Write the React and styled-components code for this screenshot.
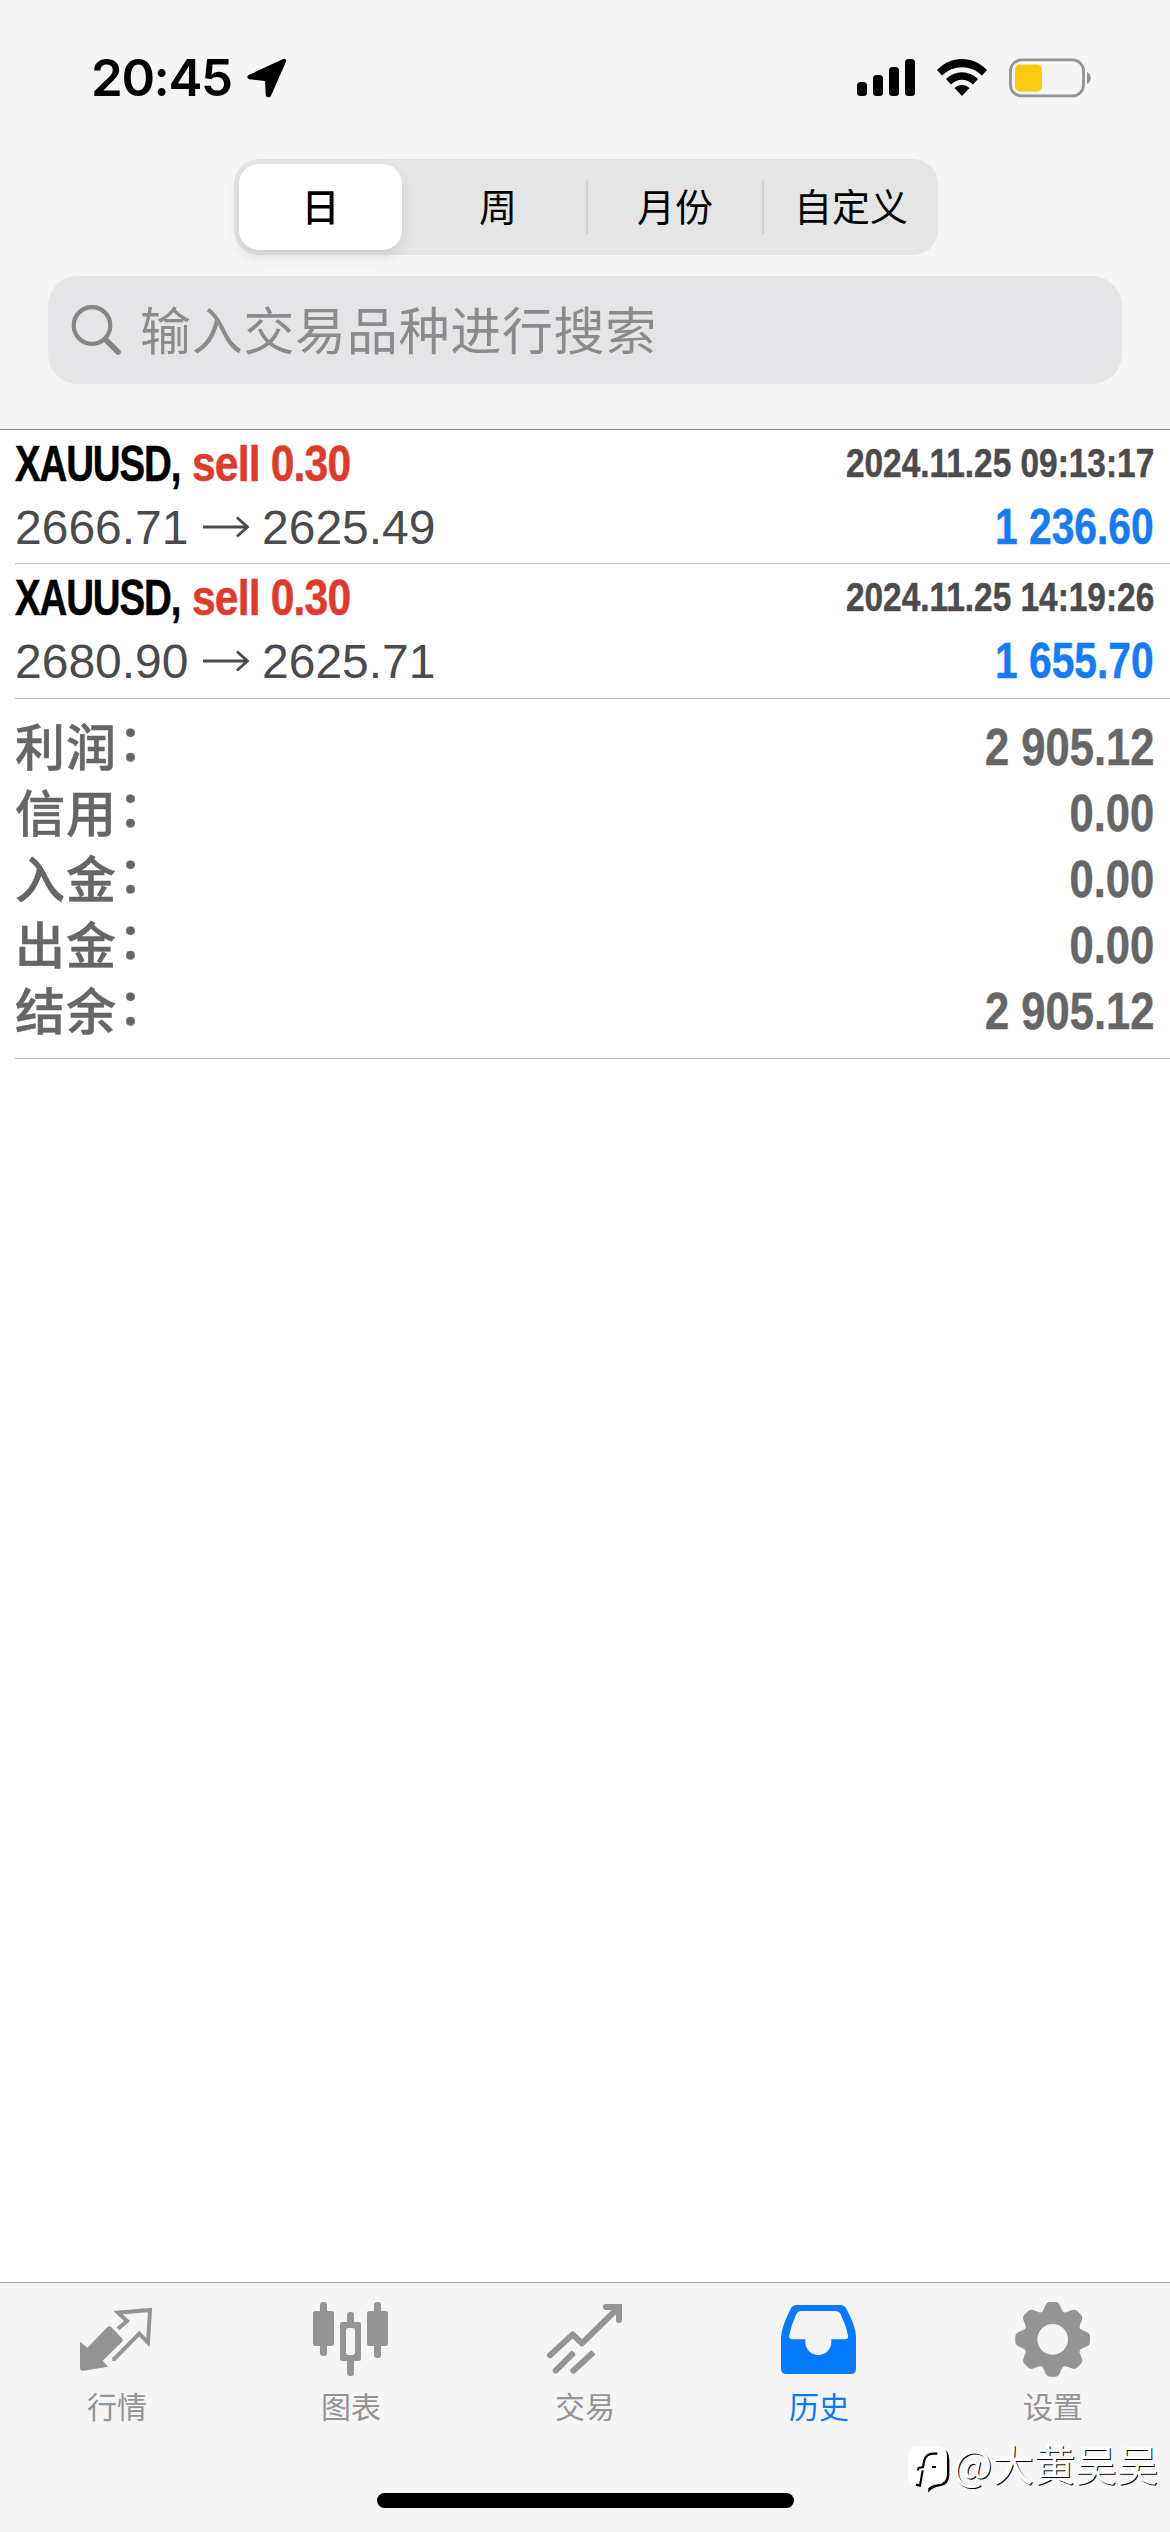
import React from "react";
import styled, { createGlobalStyle } from "styled-components";

const colors = {
  bar: "#f5f5f5",
  blue: "#157bf7",
  red: "#e03a2b",
  text: "#4b4b4d",
  muted: "#666666",
  tab: "#949494",
};

const sans = `"Liberation Sans", "Noto Sans CJK SC", sans-serif`;
const cjk = `"Noto Sans CJK SC", sans-serif`;

const GlobalStyle = createGlobalStyle`
  *, *::before, *::after {
    box-sizing: border-box;
  }
  body {
    margin: 0;
    background: #ffffff;
    font-family: ${sans};
  }
`;

const Screen = styled.div`
  position: relative;
  display: flex;
  flex-direction: column;
  width: 1170px;
  height: 2532px;
  overflow: hidden;
  background: #ffffff;
`;

const Header = styled.header`
  display: flex;
  flex-direction: column;
  height: 430px;
  background: ${colors.bar};
  border-bottom: 1px solid #8a8a8a;
`;

const StatusBar = styled.div`
  display: flex;
  align-items: center;
  justify-content: space-between;
  height: 159px;
  padding: 0 79px 4px 91px;
`;

const StatusGroup = styled.div`
  display: flex;
  align-items: center;
  gap: ${(props) => props.$gap}px;
`;

const Clock = styled.span`
  font-family: Inter, sans-serif;
  font-size: 51px;
  font-weight: 600;
  line-height: 60px;
  letter-spacing: -1.4px;
  color: #000000;
`;

const Segments = styled.div`
  display: grid;
  grid-template-columns: repeat(4, 1fr);
  align-items: center;
  width: 704px;
  height: 96px;
  margin-left: 234px;
  border-radius: 25px;
  background: #e5e5e5;
`;

const Segment = styled.button`
  height: ${(props) => (props.$active ? 86 : 54)}px;
  margin: ${(props) => (props.$active ? "0 8px 0 5px" : "0")};
  padding: 0 0 4px;
  border: 0;
  border-left: ${(props) => (props.$divided ? "2px solid #d2d2d3" : "0")};
  border-radius: ${(props) => (props.$active ? 20 : 0)}px;
  background: ${(props) => (props.$active ? "#ffffff" : "transparent")};
  box-shadow: ${(props) =>
    props.$active ? "0 6px 14px rgba(0, 0, 0, 0.1)" : "none"};
  font-family: ${cjk};
  font-size: 38px;
  font-weight: ${(props) => (props.$active ? 500 : 400)};
  line-height: 50px;
  color: #000000;
`;

const SearchField = styled.div`
  display: flex;
  align-items: center;
  gap: 17px;
  height: 108px;
  margin: 21px 48px 0;
  padding-left: 23px;
  border-radius: 30px;
  background: #e5e5e7;
`;

const Placeholder = styled.span`
  padding-bottom: 5px;
  font-family: ${cjk};
  font-size: 51px;
  line-height: 72px;
  letter-spacing: 0.7px;
  color: #8b8b8d;
`;

const History = styled.main`
  flex: 1;
  padding-left: 15px;
`;

const Deal = styled.div`
  height: ${(props) => props.$height}px;
  padding: 3px 16px 0 0;
  border-bottom: 1px solid #c2c2c4;
`;

const DealLine = styled.div`
  display: flex;
  align-items: baseline;
  justify-content: space-between;
  height: 63px;
  line-height: 63px;
`;

const Title = styled.div`
  display: flex;
  align-items: baseline;
`;

// Bold text squeezed horizontally towards its own left or right edge
const Condensed = styled.span`
  display: block;
  margin: 0;
  font-weight: 700;
  white-space: nowrap;
  -webkit-text-stroke: 0.5px currentColor;
  transform-origin: ${(props) => props.$from || "left"} center;
`;

const Symbol = styled(Condensed)`
  width: 177px;
  font-size: 50px;
  letter-spacing: -1.5px;
  color: #000000;
  transform: scaleX(0.77);
`;

const Side = styled(Condensed)`
  font-size: 50px;
  letter-spacing: -1px;
  color: ${colors.red};
  transform: scaleX(0.853);
`;

const DealTime = styled(Condensed)`
  font-size: 40px;
  color: ${colors.text};
  transform: translateY(-4px) scaleX(0.835);
`;

const Prices = styled.div`
  display: flex;
  align-items: baseline;
  font-size: 48px;
  color: ${colors.text};
`;

const OpenPrice = styled.span`
  width: 187px;
`;

const Arrow = styled.svg`
  width: 48px;
  height: 28px;
  margin-right: 12px;
`;

const Profit = styled(Condensed)`
  font-size: 50px;
  color: ${colors.blue};
  transform: scaleX(0.815);
`;

const Summary = styled.dl`
  height: 360px;
  margin: 0;
  padding: 14px 16px 0 0;
  border-bottom: 1px solid #c2c2c4;
`;

const SummaryRow = styled.div`
  display: flex;
  align-items: center;
  justify-content: space-between;
  height: 66px;
  color: ${colors.muted};
`;

const SummaryLabel = styled.dt`
  display: flex;
  padding-bottom: 4px;
  font-family: ${cjk};
  font-size: 50px;
  font-weight: 500;
  line-height: 62px;
  letter-spacing: 1px;
  -webkit-text-stroke: 0.5px currentColor;
`;

const Colon = styled.span`
  margin-left: 1px;
  transform: translateY(-5px);
`;

const SummaryValue = styled(Condensed)`
  font-size: 52px;
  line-height: 66px;
  padding-top: 2px;
  transform: scaleX(0.837);
`;

const Footer = styled.footer`
  display: flex;
  flex-direction: column;
  align-items: center;
  height: 250px;
  background: ${colors.bar};
  border-top: 1px solid #a8a8a8;
`;

const Tabs = styled.nav`
  display: grid;
  grid-template-columns: repeat(5, 1fr);
  width: 100%;
  height: 210px;
`;

const Tab = styled.a`
  display: flex;
  flex-direction: column;
  align-items: center;
  padding-top: 17px;
  color: ${(props) => (props.$active ? "#057aff" : colors.tab)};
`;

const TabIcon = styled.svg`
  width: 78px;
  height: 78px;
`;

const TabLabel = styled.span`
  margin-top: 7px;
  font-family: ${cjk};
  font-size: 30px;
  line-height: 40px;
`;

const HomeIndicator = styled.div`
  width: 417px;
  height: 15px;
  border-radius: 8px;
  background: #000000;
`;

const Watermark = styled.div`
  position: absolute;
  left: 906px;
  top: 2439px;
  display: flex;
  align-items: center;
  height: 54px;
  font-family: ${cjk};
  font-size: 41.5px;
  line-height: 54px;
  white-space: nowrap;
  color: #ffffff;
  text-shadow: 1px 1px 0 #000000;
`;

const WatermarkName = styled.span`
  margin-left: 1px;
  padding-bottom: 6px;
  line-height: 48px;
`;

const Location = () => (
  <svg width="40" height="40" viewBox="560 85 120 120">
    <path
      d="M671 94L568 142L620 148L623 196L626 196Z"
      fill="#000"
      stroke="#000"
      strokeWidth="13"
      strokeLinejoin="round"
    />
  </svg>
);

const Signal = () => (
  <svg width="58" height="38" viewBox="0 0 58 38">
    <rect x="0" y="23" width="10" height="14" rx="3.5" />
    <rect x="16" y="16" width="10" height="21" rx="3.5" />
    <rect x="32" y="8" width="10" height="29" rx="3.5" />
    <rect x="48" y="0" width="10" height="37" rx="3.5" />
  </svg>
);

const Wifi = () => (
  <svg width="50" height="38" viewBox="0 0 50 38">
    <path d="M0 11C14 -3.600 36 -3.600 50 11L45 16.500C34 5.400 16 5.400 5 16.500Z" />
    <path d="M9 20C18 11 32 11 41 20L36 25.500C30 19 20 19 14 25.500Z" />
    <path d="M17.500 29C22 25 28 25 32.500 29L25 37Z" />
  </svg>
);

const Battery = () => (
  <svg width="82" height="40" viewBox="0 0 82 40">
    <rect
      x="1.5"
      y="1.9"
      width="73"
      height="36"
      rx="11"
      fill="none"
      stroke="#949494"
      strokeWidth="2.8"
    />
    <rect x="6" y="6.500" width="27" height="27" rx="5" fill="#fcca0c" />
    <path d="M78 14C83 16 83 24 78 26Z" fill="#949494" />
  </svg>
);

const Magnifier = () => (
  <svg width="52" height="52" viewBox="0 0 52 52" fill="none" stroke="#858587">
    <circle cx="21" cy="21.500" r="18.300" strokeWidth="4.200" />
    <path d="M34.500 35.500L47 48" strokeWidth="5.600" strokeLinecap="round" />
  </svg>
);

const QuotesIcon = () => (
  <TabIcon viewBox="234 90 234 234" fill="currentColor">
    <path d="M240 215L262 233L322 172Q328 166 334 172L366 205Q371 211 366 216L308 272L324 290L250 302Q240 303 240 293Z" />
    <path
      d="M354 176L381 153L354 128L450 120L444 218L418 191L343 267L337 267"
      fill="none"
      stroke="currentColor"
      strokeWidth="12"
    />
  </TabIcon>
);

const ChartIcon = () => (
  <TabIcon viewBox="936 90 234 234" fill="currentColor">
    <rect x="960" y="96" width="21" height="162" rx="9" />
    <rect x="939" y="123" width="63" height="105" rx="7" />
    <rect x="1122" y="96" width="21" height="168" rx="9" />
    <rect x="1101" y="123" width="63" height="105" rx="7" />
    <rect x="1041" y="126" width="21" height="192" rx="9" />
    <rect x="1020" y="156" width="63" height="117" rx="7" />
    <rect x="1038" y="174" width="27" height="81" rx="7" fill="#f5f5f5" />
  </TabIcon>
);

const TradeIcon = () => (
  <TabIcon
    viewBox="288 90 234 234"
    fill="none"
    stroke="currentColor"
    strokeWidth="18"
    strokeLinecap="round"
  >
    <path d="M300 256L368 193L396 220L504 114" strokeLinejoin="round" />
    <path d="M468 111H507V150" strokeLinejoin="miter" />
    <path d="M317 302L366 253M370 302L424 253" />
    <path d="M366 253L371 248M424 253L430 247" strokeLinecap="butt" />
  </TabIcon>
);

const HistoryIcon = () => (
  <TabIcon viewBox="990 90 234 234" fill="currentColor">
    <path
      fillRule="evenodd"
      d="M1040 105H1171Q1183 105 1189 116Q1218 170 1218 200V296Q1218 312 1202 312H1009Q993 312 993 296V200Q995 170 1022 116Q1028 105 1040 105ZM1055 123Q1044 123 1039 133Q1024 163 1018 196Q1016 208 1028 208H1066V216A39 39 0 0 0 1144 216V208H1184Q1197 208 1194 196Q1187 163 1172 133Q1167 123 1156 123Z"
    />
  </TabIcon>
);

const SettingsIcon = () => (
  <TabIcon viewBox="492 90 234 234" fill="currentColor">
    <circle cx="608" cy="208" r="67" fill="none" stroke="currentColor" strokeWidth="42" />
    {[0, 45, 90, 135, 180, 225, 270, 315].map((angle) => (
      <path
        key={angle}
        transform={`rotate(${angle} 608 208)`}
        d="M568 134Q579 127 584 112Q589 96 599 96H617Q627 96 632 112Q637 127 648 134Z"
      />
    ))}
  </TabIcon>
);

const WatermarkLogo = () => (
  <svg width="46" height="54" viewBox="168 510 138 162">
    <path
      d="M270 536Q298 540 298 574V618Q298 648 270 652Q247 654 235 671L234 652Z"
      fill="#000"
    />
    <path
      d="M205 531H261Q291 531 291 562V614Q291 644 262 646Q240 649 232 662L230 648H207Q174 648 174 616V564Q174 531 205 531Z"
      fill="#fff"
    />
    <path
      d="M262 554H250Q228 555 223 574L219 594L206 597L203 604M218 604L210 650L198 647M246 594H258"
      fill="none"
      stroke="#000"
      strokeWidth="6.500"
    />
  </svg>
);

const segments = ["日", "周", "月份", "自定义"];

const deals = [
  {
    time: "2024.11.25 09:13:17",
    open: "2666.71",
    close: "2625.49",
    profit: "1 236.60",
    height: 134,
  },
  {
    time: "2024.11.25 14:19:26",
    open: "2680.90",
    close: "2625.71",
    profit: "1 655.70",
    height: 135,
  },
];

const summary = [
  ["利润", "2 905.12"],
  ["信用", "0.00"],
  ["入金", "0.00"],
  ["出金", "0.00"],
  ["结余", "2 905.12"],
];

const tabs = [
  { label: "行情", Icon: QuotesIcon },
  { label: "图表", Icon: ChartIcon },
  { label: "交易", Icon: TradeIcon },
  { label: "历史", Icon: HistoryIcon, active: true },
  { label: "设置", Icon: SettingsIcon },
];

const App = () => {
  return (
    <>
      <GlobalStyle />
      <Screen>
        <Header>
          <StatusBar>
            <StatusGroup $gap={15}>
              <Clock>20:45</Clock>
              <Location />
            </StatusGroup>
            <StatusGroup $gap={22}>
              <Signal />
              <Wifi />
              <Battery />
            </StatusGroup>
          </StatusBar>
          <Segments>
            {segments.map((name, i) => (
              <Segment key={name} $active={i === 0} $divided={i > 1}>
                {name}
              </Segment>
            ))}
          </Segments>
          <SearchField>
            <Magnifier />
            <Placeholder>输入交易品种进行搜索</Placeholder>
          </SearchField>
        </Header>
        <History>
          {deals.map((deal) => (
            <Deal key={deal.time} $height={deal.height}>
              <DealLine>
                <Title>
                  <Symbol>XAUUSD,</Symbol>
                  <Side>sell 0.30</Side>
                </Title>
                <DealTime $from="right">{deal.time}</DealTime>
              </DealLine>
              <DealLine>
                <Prices>
                  <OpenPrice>{deal.open}</OpenPrice>
                  <Arrow
                    viewBox="0 0 48 28"
                    fill="none"
                    stroke={colors.text}
                    strokeWidth="2.8"
                  >
                    <path d="M1 11H45M35 1.500L45.500 11L35 20.500" />
                  </Arrow>
                  <span>{deal.close}</span>
                </Prices>
                <Profit $from="right">{deal.profit}</Profit>
              </DealLine>
            </Deal>
          ))}
          <Summary>
            {summary.map(([label, value]) => (
              <SummaryRow key={label}>
                <SummaryLabel>
                  {label}
                  <Colon>：</Colon>
                </SummaryLabel>
                <SummaryValue as="dd" $from="right">
                  {value}
                </SummaryValue>
              </SummaryRow>
            ))}
          </Summary>
        </History>
        <Footer>
          <Tabs>
            {tabs.map(({ label, Icon, active }) => (
              <Tab key={label} $active={active}>
                <Icon />
                <TabLabel>{label}</TabLabel>
              </Tab>
            ))}
          </Tabs>
          <HomeIndicator />
        </Footer>
        <Watermark>
          <WatermarkLogo />
          <WatermarkName>@大黄吴吴</WatermarkName>
        </Watermark>
      </Screen>
    </>
  );
};

export default App;
